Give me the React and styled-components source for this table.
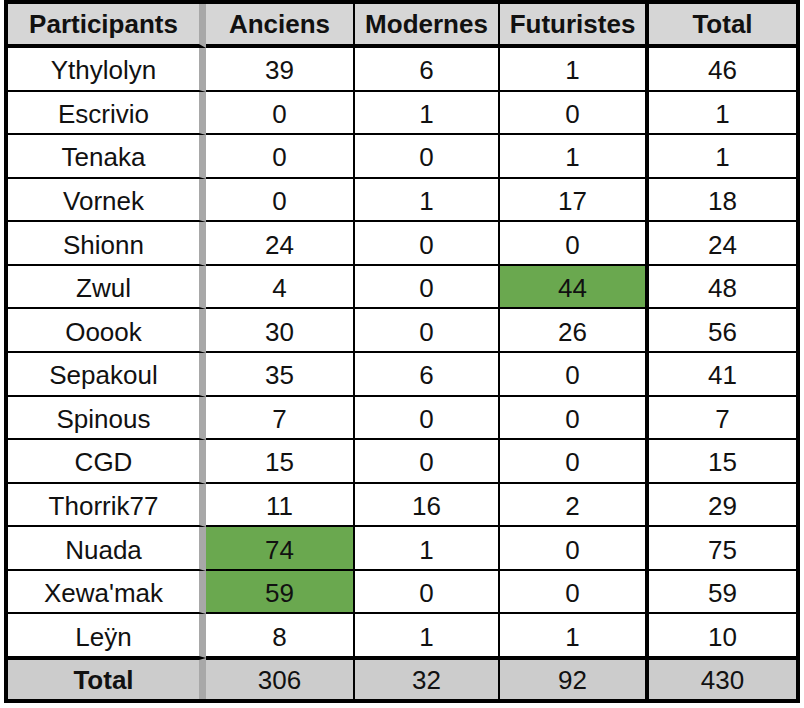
import React from 'react'
import styled, { createGlobalStyle } from 'styled-components'

const GlobalStyle = createGlobalStyle`
  body {
    margin: 0;
    background: #ffffff;
    font-family: 'Liberation Sans', Arial, sans-serif;
  }
`

const columns = ['Participants', 'Anciens', 'Modernes', 'Futuristes', 'Total']

// right edge of each column: colour and thickness
const colEdges = [
  { w: 7, c: '#a8a8a8' },
  { w: 2, c: '#000' },
  { w: 2, c: '#000' },
  { w: 4, c: '#000' },
  { w: 0, c: '#000' },
]

const rows = [
  ['Ythylolyn', 39, 6, 1, 46],
  ['Escrivio', 0, 1, 0, 1],
  ['Tenaka', 0, 0, 1, 1],
  ['Vornek', 0, 1, 17, 18],
  ['Shionn', 24, 0, 0, 24],
  ['Zwul', 4, 0, 44, 48, { hi: 3 }],
  ['Ooook', 30, 0, 26, 56],
  ['Sepakoul', 35, 6, 0, 41],
  ['Spinous', 7, 0, 0, 7],
  ['CGD', 15, 0, 0, 15],
  ['Thorrik77', 11, 16, 2, 29],
  ['Nuada', 74, 1, 0, 75, { hi: 1 }],
  ["Xewa'mak", 59, 0, 0, 59, { hi: 1 }],
  ['Leÿn', 8, 1, 1, 10],
]

const totals = ['Total', 306, 32, 92, 430]

const Sheet = styled.div`
  display: grid;
  grid-template-columns: 198px 149px 145px 149px 147px;
  grid-template-rows: 44px repeat(14, 1fr) 41px;
  width: 796px;
  height: 703px;
  margin-left: 4px;
  box-sizing: border-box;
  border: 4px solid #000;
`

const Cell = styled.div`
  display: flex;
  align-items: center;
  justify-content: center;
  box-sizing: border-box;
  font-size: 26px;
  color: #111111;
  padding-top: 4px;
  border-right: ${p => colEdges[p.$col].w}px solid ${p => colEdges[p.$col].c};
  background: ${p => (p.$hi ? '#6aa84f' : '#ffffff')};
  border-bottom: 2px solid #000;
`

const HeadCell = styled(Cell)`
  font-weight: bold;
  padding-top: 1px;
  background: #d6d6d6;
  border-bottom: 4px solid #000;
`

const TotalCell = styled(Cell)`
  font-weight: ${p => (p.$col === 0 ? 'bold' : 'normal')};
  padding-top: 1px;
  background: #cccccc;
  border-top: 2px solid #000;
  border-bottom: 0;
`

export default function App() {
  return (
    <>
      <GlobalStyle />
      <Sheet>
        {columns.map((c, i) => (
          <HeadCell key={c} $col={i}>{c}</HeadCell>
        ))}
        {rows.map(r => {
          const opts = r[5] || {}
          return r.slice(0, 5).map((v, i) => (
            <Cell key={r[0] + i} $col={i} $hi={opts.hi === i}>
              {v}
            </Cell>
          ))
        })}
        {totals.map((v, i) => (
          <TotalCell key={'t' + i} $col={i}>{v}</TotalCell>
        ))}
      </Sheet>
    </>
  )
}
